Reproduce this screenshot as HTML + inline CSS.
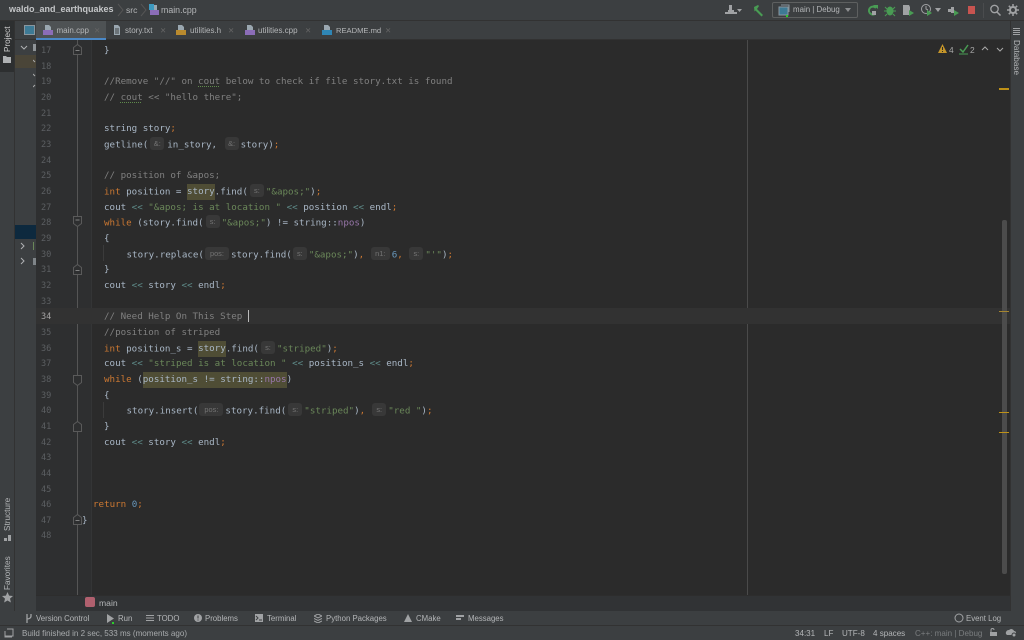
<!DOCTYPE html>
<html><head><meta charset="utf-8"><style>
html,body{margin:0;padding:0;width:1024px;height:640px;overflow:hidden;background:#2b2b2b}
*{box-sizing:border-box}
.a{position:absolute}
.ui{font-family:"Liberation Sans",sans-serif;font-size:7.8px;color:#b4b6b8;white-space:nowrap;position:absolute}
.st{font-size:8.05px;top:629px}
.ln{position:absolute;left:41px;width:20px;font:8.6px "DejaVu Sans Mono","Liberation Mono",monospace;color:#5c5f62;height:16px;line-height:16px;margin-top:1px}
.c{position:absolute;left:104px;font:9.2px "DejaVu Sans Mono","Liberation Mono",monospace;color:#a9b7c6;white-space:pre;height:16px;line-height:16px;letter-spacing:0;margin-top:1px}
.k{color:#cc7832}.s{color:#6a8759}.g{color:#808080}.o{color:#5f8c8a}.n{color:#6897bb}.p{color:#9876aa}
.h{display:inline-block;background:#383838;color:#747474;font:7.4px "Liberation Sans",sans-serif;border-radius:3px;text-align:center;height:13px;line-height:13px;width:14px;margin:0 2px;vertical-align:1.500px}
.y{background:#4f4d35;padding:2px 0 3px}
.w{text-decoration:underline dotted #5f8a4c 1px;text-underline-offset:2px}
.tab{position:absolute;top:22px;height:18px;font:8px/17px "Liberation Sans",sans-serif;color:#b4b6b8;white-space:nowrap}
.x{color:#666;font-size:7.5px;position:absolute;top:26px}
.v{position:absolute;font:8.2px "Liberation Sans",sans-serif;color:#b4b6b8;transform-origin:0 0;white-space:nowrap}
</style></head><body>

<!-- title bar -->
<div class="a" style="left:0;top:0;width:1024px;height:21px;background:#3c3f41;border-bottom:1px solid #323232"></div>
<div class="ui" style="left:9px;top:4px;font-weight:bold;font-size:9px;color:#c4c6c8">waldo_and_earthquakes</div>
<svg class="a" style="left:117px;top:3px" width="8" height="14"><path d="M1 1l5 6-5 6" stroke="#555" fill="none"/></svg>
<div class="ui" style="left:126px;top:5px;font-size:8.6px">src</div>
<svg class="a" style="left:140px;top:3px" width="8" height="14"><path d="M1 1l5 6-5 6" stroke="#555" fill="none"/></svg>
<svg class="a" style="left:149px;top:4px" width="11" height="12"><rect x="0" y="0" width="5" height="6" fill="#3d9ac0"/><rect x="5" y="1" width="3" height="5" fill="#9aa7b0"/><rect x="1" y="6" width="9" height="5" fill="#8b6db8"/></svg>
<div class="ui" style="left:161px;top:5px;font-size:8.8px">main.cpp</div>

<!-- toolbar icons -->
<svg class="a" style="left:723px;top:4px" width="20" height="13"><path d="M6 1h3v5h2v2h3v2H2V8h3V6h1z" fill="#a0a2a4"/><path d="M14 5h5l-2.500 3z" fill="#a0a2a4"/></svg>
<svg class="a" style="left:752px;top:3px" width="14" height="14"><path d="M2 4l4-2 1 1-2 3 6 6-1.500 1.500-6-6-1 1z" fill="#499c54"/></svg>
<div class="a" style="left:772px;top:2px;width:86px;height:16px;border:1px solid #5e6060;border-radius:2px"></div>
<svg class="a" style="left:778px;top:4px" width="13" height="13"><rect x="1" y="3" width="9" height="8" fill="#3d7a95" stroke="#8a969e" stroke-width="1"/><path d="M3 1h8v7" stroke="#8a969e" fill="none"/><rect x="8" y="11" width="2" height="2" fill="#2bd02b"/></svg>
<div class="ui" style="left:793px;top:5px;font-size:7.9px">main | Debug</div>
<svg class="a" style="left:844px;top:7px" width="9" height="6"><path d="M1 1h6l-3 4z" fill="#8c8e90"/></svg>
<svg class="a" style="left:866px;top:3px" width="13" height="14"><path d="M10 5a4 4 0 1 0 -1 6" stroke="#499c54" stroke-width="2" fill="none"/><path d="M7 2h5v4z" fill="#499c54"/><rect x="6" y="8" width="4" height="4" fill="#a0a2a4"/></svg>
<svg class="a" style="left:884px;top:4px" width="12" height="13"><ellipse cx="6" cy="7" rx="3.500" ry="4.500" fill="#499c54"/><path d="M1 3l2 2M11 3L9 5M0 7h3M9 7h3M1 12l2-2M11 12l-2-2" stroke="#499c54"/></svg>
<svg class="a" style="left:902px;top:4px" width="13" height="13"><path d="M1 1h6l1 2v8H1z" fill="#a0a2a4"/><path d="M7 6l5 3-5 3z" fill="#499c54"/></svg>
<svg class="a" style="left:920px;top:3px" width="13" height="14"><circle cx="6" cy="6" r="4.500" stroke="#a0a2a4" fill="none"/><path d="M6 3v3l2 1" stroke="#a0a2a4" fill="none"/><path d="M7 7l5 3-5 3z" fill="#499c54"/></svg>
<svg class="a" style="left:934px;top:8px" width="8" height="5"><path d="M1 0h6L4 4z" fill="#a0a2a4"/></svg>
<svg class="a" style="left:947px;top:4px" width="13" height="13"><path d="M1 5h3V3h3v6H4V8H1z" fill="#a0a2a4"/><path d="M7 6l5 3-5 3z" fill="#499c54"/></svg>
<div class="a" style="left:968px;top:6px;width:7px;height:8px;background:#c75450"></div>
<div class="a" style="left:983px;top:3px;width:1px;height:15px;background:#4a4c4e"></div>
<svg class="a" style="left:989px;top:3px" width="13" height="14"><circle cx="5.500" cy="6" r="3.700" stroke="#a0a2a4" stroke-width="1.300" fill="none"/><path d="M8 9l3.500 3.500" stroke="#a0a2a4" stroke-width="1.500"/></svg>
<svg class="a" style="left:1007px;top:4px" width="12" height="12"><circle cx="6" cy="6" r="3" stroke="#a0a2a4" stroke-width="2" fill="none"/><path d="M6 0v3M6 9v3M0 6h3M9 6h3M1.800 1.800l2 2M8.200 8.200l2 2M10.200 1.800l-2 2M3.800 8.200l-2 2" stroke="#a0a2a4" stroke-width="1.500"/></svg>

<!-- left stripe -->
<div class="a" style="left:0;top:21px;width:36px;height:590px;background:#3c3f41"></div>
<div class="a" style="left:0;top:21px;width:15px;height:51px;background:#2d2f30"></div>
<div class="a" style="left:14px;top:21px;width:1px;height:590px;background:#323232"></div>
<div class="v" style="left:3px;top:52px;transform:rotate(-90deg);color:#d0d0d0">Project</div>
<svg class="a" style="left:3px;top:56px" width="9" height="8"><path d="M0 0h3l1 1h4v6H0z" fill="#afb1b3"/></svg>
<div class="v" style="left:3px;top:531px;transform:rotate(-90deg)">Structure</div>
<svg class="a" style="left:4px;top:535px" width="8" height="7"><rect x="0" y="3" width="3" height="3" fill="#a0a2a4"/><rect x="4" y="0" width="3" height="6" fill="#a0a2a4"/></svg>
<div class="v" style="left:3px;top:590px;transform:rotate(-90deg)">Favorites</div>
<svg class="a" style="left:2px;top:592px" width="11" height="11"><path d="M5.500 0l1.600 3.600 3.900.4-3 2.600.9 3.900-3.400-2-3.400 2 .9-3.900-3-2.600 3.900-.4z" fill="#a0a2a4"/></svg>

<!-- project pane remnants -->
<div class="a" style="left:15px;top:40px;width:21px;height:571px;background:#3c3f41"></div>
<div class="a" style="left:15px;top:55px;width:21px;height:13px;background:#4a4538"></div>
<div class="a" style="left:15px;top:225px;width:21px;height:14px;background:#0d293e"></div>
<svg class="a" style="left:20px;top:45px" width="8" height="6"><path d="M1 1l3 3 3-3" stroke="#afb1b3" fill="none"/></svg>
<div class="a" style="left:33px;top:44px;width:3px;height:7px;background:#8f9498"></div>
<svg class="a" style="left:20px;top:242px" width="6" height="8"><path d="M1 1l3 3-3 3" stroke="#afb1b3" fill="none"/></svg>
<svg class="a" style="left:20px;top:257px" width="6" height="8"><path d="M1 1l3 3-3 3" stroke="#afb1b3" fill="none"/></svg>
<div class="a" style="left:33px;top:242px;width:1px;height:8px;background:#6a8759"></div>
<div class="a" style="left:33px;top:258px;width:3px;height:7px;background:#7f8589"></div>
<svg class="a" style="left:33px;top:58px" width="3" height="30"><path d="M0 2l2 2M0 16l2 2M0 29l2 -2" stroke="#aaa" fill="none"/></svg>

<!-- tabs -->
<div class="a" style="left:15px;top:21px;width:995px;height:19px;background:#3c3f41;border-bottom:1px solid #323232"></div>
<div class="a" style="left:36px;top:21px;width:70px;height:19px;background:#4e5254"></div>
<div class="a" style="left:36px;top:38px;width:70px;height:2px;background:#4a88c7"></div>
<svg class="a" style="left:24px;top:25px" width="11" height="10"><rect x=".5" y=".5" width="10" height="9" fill="#3d7a95" stroke="#8a969e"/></svg>
<svg class="a" style="left:43px;top:25px" width="11" height="11"><path d="M2 0h4l2 2v3H2z" fill="#9aa7b0"/><rect x="0" y="5" width="10" height="5" fill="#8b6db8"/></svg>
<div class="tab" style="left:56.500px">main.cpp</div><div class="x" style="left:94px">✕</div>
<svg class="a" style="left:113px;top:25px" width="8" height="11"><path d="M1 0h4l2 2v8H1z" fill="#9aa7b0"/><path d="M2 4h4M2 6h4M2 8h4" stroke="#3c3f41"/></svg>
<div class="tab" style="left:125px">story.txt</div><div class="x" style="left:160px">✕</div>
<svg class="a" style="left:176px;top:25px" width="11" height="11"><path d="M2 0h4l2 2v3H2z" fill="#9aa7b0"/><rect x="0" y="5" width="10" height="5" fill="#b98a2e"/></svg>
<div class="tab" style="left:190px">utilities.h</div><div class="x" style="left:228px">✕</div>
<svg class="a" style="left:245px;top:25px" width="11" height="11"><path d="M2 0h4l2 2v3H2z" fill="#9aa7b0"/><rect x="0" y="5" width="10" height="5" fill="#8b6db8"/></svg>
<div class="tab" style="left:258px">utilities.cpp</div><div class="x" style="left:305px">✕</div>
<svg class="a" style="left:322px;top:25px" width="11" height="11"><path d="M2 0h4l2 2v3H2z" fill="#9aa7b0"/><rect x="0" y="5" width="10" height="5" fill="#2f86b5"/></svg>
<div class="tab" style="left:336px;font-size:7.6px">README.md</div><div class="x" style="left:385px">✕</div>

<!-- editor -->
<div class="a" style="left:36px;top:40px;width:974px;height:555px;background:#2b2b2b"></div>
<div class="a" style="left:36px;top:40px;width:55px;height:555px;background:#2e2f30"></div>
<div class="a" style="left:77px;top:40px;width:1px;height:555px;background:#555"></div>
<div class="a" style="left:91px;top:40px;width:1px;height:555px;background:#343536"></div>
<div class="a" style="left:747px;top:40px;width:1px;height:555px;background:#4a4a4a"></div>
<div class="a" style="left:36px;top:308px;width:974px;height:16px;background:#323232"></div>

<div class="ln" style="top:42px">17</div><div class="ln" style="top:57.7px">18</div><div class="ln" style="top:73.3px">19</div><div class="ln" style="top:89px">20</div><div class="ln" style="top:104.6px">21</div><div class="ln" style="top:120.3px">22</div><div class="ln" style="top:136px">23</div><div class="ln" style="top:151.6px">24</div><div class="ln" style="top:167.3px">25</div><div class="ln" style="top:182.9px">26</div><div class="ln" style="top:198.6px">27</div><div class="ln" style="top:214.3px">28</div><div class="ln" style="top:229.9px">29</div><div class="ln" style="top:245.6px">30</div><div class="ln" style="top:261.2px">31</div><div class="ln" style="top:276.9px">32</div><div class="ln" style="top:292.6px">33</div><div class="ln" style="top:308.2px;color:#a4a3a3">34</div><div class="ln" style="top:323.9px">35</div><div class="ln" style="top:339.5px">36</div><div class="ln" style="top:355.2px">37</div><div class="ln" style="top:370.9px">38</div><div class="ln" style="top:386.5px">39</div><div class="ln" style="top:402.2px">40</div><div class="ln" style="top:417.8px">41</div><div class="ln" style="top:433.5px">42</div><div class="ln" style="top:449.2px">43</div><div class="ln" style="top:464.8px">44</div><div class="ln" style="top:480.5px">45</div><div class="ln" style="top:496.1px">46</div><div class="ln" style="top:511.8px">47</div><div class="ln" style="top:527.4px">48</div>

<!-- fold markers -->
<svg class="a" style="left:73px;top:44px" width="9" height="11"><path d="M.5 10.500V3.500L4.500.5l4 3v7z" fill="#2e2f30" stroke="#5a5a5a"/><path d="M2.500 6.500h4" stroke="#808080"/></svg>
<svg class="a" style="left:73px;top:216px" width="9" height="11"><path d="M.5 .5v7l4 3 4-3v-7z" fill="#2e2f30" stroke="#5a5a5a"/><path d="M2.500 4h4" stroke="#808080"/></svg>
<svg class="a" style="left:73px;top:264px" width="9" height="11"><path d="M.5 10.500V3.500L4.500.5l4 3v7z" fill="#2e2f30" stroke="#5a5a5a"/><path d="M2.500 6.500h4" stroke="#808080"/></svg>
<svg class="a" style="left:73px;top:375px" width="9" height="11"><path d="M.5 .5v7l4 3 4-3v-7z" fill="#2e2f30" stroke="#5a5a5a"/></svg>
<svg class="a" style="left:73px;top:421px" width="9" height="11"><path d="M.5 10.500V3.500L4.500.5l4 3v7z" fill="#2e2f30" stroke="#5a5a5a"/></svg>
<svg class="a" style="left:73px;top:514px" width="9" height="11"><path d="M.5 10.500V3.500L4.500.5l4 3v7z" fill="#2e2f30" stroke="#5a5a5a"/><path d="M2.500 6.500h4" stroke="#808080"/></svg>

<div class="a" style="left:103px;top:245px;width:1px;height:16px;background:#3b3b3b"></div>
<div class="a" style="left:103px;top:402px;width:1px;height:16px;background:#3b3b3b"></div>

<div class="c" style="top:42px">}</div>
<div class="c g" style="top:73.3px">//Remove "//" on <span class="w">cout</span> below to check if file story.txt is found</div>
<div class="c g" style="top:89px">// <span class="w">cout</span> &lt;&lt; "hello there";</div>
<div class="c" style="top:120.3px">string story<span class="k">;</span></div>
<div class="c" style="top:136px">getline(<span class="h" style="margin:0 3px 0 2px">&amp;:</span>in_story, <span class="h" style="margin:0 2px 0 2px">&amp;:</span>story)<span class="k">;</span></div>
<div class="c g" style="top:167.3px">// position of &amp;apos;</div>
<div class="c" style="top:182.9px"><span class="k">int</span> position = <span class="y">story</span>.find(<span class="h">s:</span><span class="s">"&amp;apos;"</span>)<span class="k">;</span></div>
<div class="c" style="top:198.6px">cout <span class="o">&lt;&lt;</span> <span class="s">"&amp;apos; is at location "</span> <span class="o">&lt;&lt;</span> position <span class="o">&lt;&lt;</span> endl<span class="k">;</span></div>
<div class="c" style="top:214.3px"><span class="k">while</span> (story.find(<span class="h">s:</span><span class="s">"&amp;apos;"</span>) != string::<span class="p">npos</span>)</div>
<div class="c" style="top:229.9px">{</div>
<div class="c" style="top:245.6px;left:126.5px">story.replace(<span class="h" style="width:24px;margin:0 2px 0 1px">pos:</span>story.find(<span class="h" style="margin:0 2px 0 1px">s:</span><span class="s">"&amp;apos;"</span>)<span class="k">,</span> <span class="h" style="width:19px;margin:0 2px 0 1px">n1:</span><span class="n">6</span><span class="k">,</span> <span class="h" style="margin:0 2px 0 1px">s:</span><span class="s">"'"</span>)<span class="k">;</span></div>
<div class="c" style="top:261.2px">}</div>
<div class="c" style="top:276.9px">cout <span class="o">&lt;&lt;</span> story <span class="o">&lt;&lt;</span> endl<span class="k">;</span></div>
<div class="c g" style="top:308.2px">// Need Help On This Step </div>
<div class="a" style="left:248px;top:310px;width:1px;height:12px;background:#bbb"></div>
<div class="c g" style="top:323.9px">//position of striped</div>
<div class="c" style="top:339.5px"><span class="k">int</span> position_s = <span class="y">story</span>.find(<span class="h">s:</span><span class="s">"striped"</span>)<span class="k">;</span></div>
<div class="c" style="top:355.2px">cout <span class="o">&lt;&lt;</span> <span class="s">"striped is at location "</span> <span class="o">&lt;&lt;</span> position_s <span class="o">&lt;&lt;</span> endl<span class="k">;</span></div>
<div class="c" style="top:370.9px"><span class="k">while</span> (<span class="y">position_s != string::<span class="p">npos</span></span>)</div>
<div class="c" style="top:386.5px">{</div>
<div class="c" style="top:402.2px;left:126.5px">story.insert(<span class="h" style="width:24px;margin:0 2px 0 1px">pos:</span>story.find(<span class="h">s:</span><span class="s">"striped"</span>)<span class="k">,</span> <span class="h" style="margin:0 2px 0 1.500px">s:</span><span class="s">"red "</span>)<span class="k">;</span></div>
<div class="c" style="top:417.8px">}</div>
<div class="c" style="top:433.5px">cout <span class="o">&lt;&lt;</span> story <span class="o">&lt;&lt;</span> endl<span class="k">;</span></div>
<div class="c" style="top:496.1px;left:93px"><span class="k">return</span> <span class="n">0</span><span class="k">;</span></div>
<div class="c" style="top:511.8px;left:82px">}</div>

<!-- inspections widget -->
<svg class="a" style="left:938px;top:44px" width="10" height="10"><path d="M4.500 0L9 9H0z" fill="#c4952a"/><path d="M4.500 3v3M4.500 7v1" stroke="#2b2b2b"/></svg>
<div class="ui" style="left:949px;top:45px;color:#a8a8a8;font-size:8.4px">4</div>
<svg class="a" style="left:959px;top:44px" width="10" height="11"><path d="M1 5l3 3 5-7" stroke="#499c54" stroke-width="1.500" fill="none"/><path d="M0 10h9" stroke="#499c54"/></svg>
<div class="ui" style="left:970px;top:45px;color:#a8a8a8;font-size:8.4px">2</div>
<svg class="a" style="left:981px;top:46px" width="8" height="5"><path d="M1 4l3-3 3 3" stroke="#a8a8a8" fill="none"/></svg>
<svg class="a" style="left:996px;top:47px" width="8" height="5"><path d="M1 1l3 3 3-3" stroke="#a8a8a8" fill="none"/></svg>

<!-- scrollbar -->
<div class="a" style="left:1002px;top:220px;width:5px;height:354px;background:#4c4c4c;border-radius:2px"></div>
<div class="a" style="left:999px;top:88px;width:10px;height:2px;background:#be9117"></div>
<div class="a" style="left:999px;top:311px;width:10px;height:1px;background:#a5852f"></div>
<div class="a" style="left:999px;top:412px;width:10px;height:1px;background:#be9117"></div>
<div class="a" style="left:999px;top:432px;width:10px;height:1px;background:#be9117"></div>

<!-- right stripe -->
<div class="a" style="left:1010px;top:21px;width:14px;height:590px;background:#3c3f41;border-left:1px solid #323232"></div>
<svg class="a" style="left:1012px;top:27px" width="10" height="10"><path d="M1 1.500h7M1 3.500h7M1 5.500h7M1 7.500h7" stroke="#a0a2a4"/></svg>
<div class="v" style="left:1021px;top:40px;transform:rotate(90deg)">Database</div>

<!-- breadcrumb -->
<div class="a" style="left:36px;top:595px;width:974px;height:16px;background:#313335;border-top:1px solid #2d2d2d"></div>
<div class="a" style="left:85px;top:597px;width:10px;height:10px;background:#b0606e;border-radius:2px"></div>
<div class="ui" style="left:99px;top:598px;font-size:8.6px">main</div>

<!-- bottom tool bar -->
<div class="a" style="left:0;top:611px;width:1024px;height:15px;background:#3c3f41;border-bottom:1px solid #323232"></div>
<div class="a" style="left:0;top:626px;width:1024px;height:14px;background:#3c3f41"></div>
<svg class="a" style="left:25px;top:613px" width="8" height="11"><path d="M2 1v9M6 1v2c0 2-2 3-4 3" stroke="#a0a2a4" stroke-width="1.300" fill="none"/></svg>
<div class="ui" style="left:36px;top:614px">Version Control</div>
<svg class="a" style="left:107px;top:614px" width="9" height="11"><path d="M0 0l7 4.500-7 4.500z" fill="#a0a2a4"/><rect x="5" y="8" width="2" height="2" fill="#2bd02b"/></svg>
<div class="ui" style="left:118px;top:614px">Run</div>
<svg class="a" style="left:146px;top:614px" width="8" height="9"><path d="M0 1.500h8M0 4h8M0 6.500h8" stroke="#a0a2a4"/></svg>
<div class="ui" style="left:157px;top:614px">TODO</div>
<svg class="a" style="left:194px;top:614px" width="8" height="8"><circle cx="4" cy="4" r="4" fill="#a0a2a4"/><path d="M4 1.500v3M4 5.500v1" stroke="#3c3f41"/></svg>
<div class="ui" style="left:205px;top:614px">Problems</div>
<svg class="a" style="left:255px;top:614px" width="9" height="8"><rect width="8" height="8" fill="#a0a2a4"/><path d="M1 2l2 2-2 2M4 6h3" stroke="#3c3f41" fill="none"/></svg>
<div class="ui" style="left:267px;top:614px">Terminal</div>
<svg class="a" style="left:314px;top:614px" width="8" height="9"><path d="M0 2l4-2 4 2-4 2zM0 4.500l4 2 4-2M0 7l4 2 4-2" stroke="#a0a2a4" fill="none"/></svg>
<div class="ui" style="left:326px;top:614px">Python Packages</div>
<svg class="a" style="left:404px;top:614px" width="9" height="8"><path d="M4 0l4 8H0z" fill="#a0a2a4"/></svg>
<div class="ui" style="left:416px;top:614px">CMake</div>
<svg class="a" style="left:456px;top:615px" width="9" height="7"><path d="M0 0h8v2H0zM0 3h5v2H0z" fill="#a0a2a4"/></svg>
<div class="ui" style="left:468px;top:614px">Messages</div>
<svg class="a" style="left:954px;top:613px" width="10" height="10"><circle cx="5" cy="5" r="4" stroke="#a0a2a4" fill="none"/></svg>
<div class="ui" style="left:966px;top:614px">Event Log</div>

<!-- status bar -->
<svg class="a" style="left:4px;top:628px" width="10" height="10"><path d="M3 1h6v7H1" stroke="#a0a2a4" fill="none"/><path d="M1 3v6h7" stroke="#a0a2a4" fill="none"/></svg>
<div class="ui st" style="left:22px;color:#a8abad">Build finished in 2 sec, 533 ms (moments ago)</div>
<div class="ui st" style="left:795px">34:31</div>
<div class="ui st" style="left:824px">LF</div>
<div class="ui st" style="left:842px">UTF-8</div>
<div class="ui st" style="left:873px">4 spaces</div>
<div class="ui st" style="left:915px;color:#7a7d7f">C++: main | Debug</div>
<svg class="a" style="left:989px;top:628px" width="9" height="9"><rect x="1" y="4" width="7" height="4" fill="#a0a2a4"/><path d="M2 4V2a1.500 1.500 0 0 1 3 0" stroke="#a0a2a4" fill="none"/></svg>
<svg class="a" style="left:1005px;top:628px" width="12" height="10"><path d="M1 6a3 3 0 0 1 3-4 3 3 0 0 1 5 1 2 2 0 0 1 0 4H2z" fill="#a0a2a4"/><circle cx="9" cy="7" r="2" stroke="#3c3f41" fill="#a0a2a4"/></svg>
</body></html>
